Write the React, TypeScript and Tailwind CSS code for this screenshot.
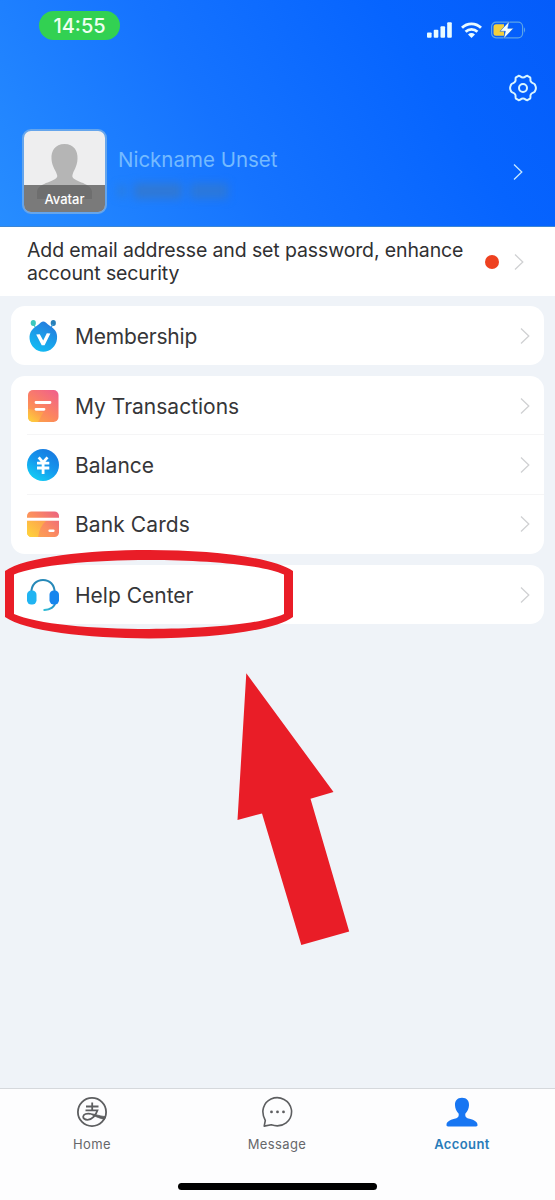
import type { ReactNode } from "react";

const Chevron = ({ className = "text-[#d0d1d3]" }: { className?: string }) => (
  <svg className={`w-[10px] h-[18px] shrink-0 ${className}`} viewBox="0 0 10 18" fill="none" stroke="currentColor" strokeWidth="1.3">
    <path d="M1 1.5 8.8 9 1 16.5" />
  </svg>
);

const MembershipIcon = () => (
  <svg className="w-8 h-[34px]" viewBox="0 0 32 34">
    <defs>
      <linearGradient id="member" x1="0.8" y1="0" x2="0.3" y2="1">
        <stop offset="0" stopColor="#2577dc" />
        <stop offset="1" stopColor="#12bdf4" />
      </linearGradient>
    </defs>
    <ellipse cx="6.3" cy="4" rx="2.6" ry="3" fill="#3cc8bd" />
    <path d="M6.5 5 9 9.5" stroke="#3cc8bd" strokeWidth="1.2" />
    <ellipse cx="26.3" cy="4" rx="2.6" ry="3" fill="#287fb8" />
    <path d="M26 5 23.5 9.5" stroke="#3b9cdc" strokeWidth="1.2" />
    <path d="M13.8 3.6Q16.3 1.2 18.8 3.6C21.5 6.8 25.5 7.8 28 11.3 30 14 30.3 16.8 30 20 29.2 27.4 23.3 32.7 16.3 32.7S3.4 27.4 2.6 20C2.3 16.8 2.8 14 4.8 11.3 7.3 7.8 11.1 6.8 13.8 3.6Z" fill="url(#member)" />
    <path d="m9.2 15.5 3.6-.2 3.4 6.2 3.6-7.2 3.6.2-5.8 11.7h-2.9Z" fill="#fff" />
  </svg>
);

const TransactionsIcon = () => (
  <svg className="w-8 h-8" viewBox="0 0 32 32">
    <defs>
      <linearGradient id="bill" x1="0.9" y1="0" x2="0.2" y2="1">
        <stop offset="0" stopColor="#f0608c" />
        <stop offset="0.6" stopColor="#fc855f" />
        <stop offset="1" stopColor="#fca746" />
      </linearGradient>
      <linearGradient id="billCorner" x1="0.7" y1="0.3" x2="0" y2="1">
        <stop offset="0" stopColor="#fda34a" />
        <stop offset="1" stopColor="#ffdf36" />
      </linearGradient>
      <clipPath id="billClip">
        <rect x="1" width="30.5" height="32" rx="5" />
      </clipPath>
    </defs>
    <g clipPath="url(#billClip)">
      <rect width="32" height="32" fill="url(#bill)" />
      <path d="M0 19C7 19 13 23 16.5 22L11 32H0Z" fill="url(#billCorner)" opacity="0.85" />
    </g>
    <path d="M9 12.5H23M9 19.3H17" stroke="#fff" strokeWidth="2.8" strokeLinecap="round" />
  </svg>
);

const BalanceIcon = () => (
  <svg className="w-8 h-8" viewBox="0 0 32 32">
    <defs>
      <linearGradient id="coin" x1="0.8" y1="0" x2="0.2" y2="1">
        <stop offset="0" stopColor="#1877df" />
        <stop offset="0.5" stopColor="#1598ee" />
        <stop offset="1" stopColor="#12d3f5" />
      </linearGradient>
    </defs>
    <circle cx="16" cy="16" r="16" fill="url(#coin)" />
    <path d="m11.7 8.4 4.3 5 4.5-5M10 14.2h12.3M10 19h12.3M16.1 13v12" stroke="#fff" strokeWidth="2.8" fill="none" />
  </svg>
);

const CardsIcon = () => (
  <svg className="w-8 h-8" viewBox="0 0 32 32">
    <defs>
      <linearGradient id="card" x1="1" y1="0" x2="0" y2="1">
        <stop offset="0" stopColor="#e95c86" />
        <stop offset="0.5" stopColor="#fb8c60" />
        <stop offset="1" stopColor="#fdb344" />
      </linearGradient>
      <linearGradient id="cardCorner" x1="1" y1="0" x2="0" y2="1">
        <stop offset="0" stopColor="#fda24e" />
        <stop offset="1" stopColor="#ffdc37" />
      </linearGradient>
      <clipPath id="cardClip">
        <rect y="3.5" width="32" height="25.5" rx="4.5" />
      </clipPath>
    </defs>
    <g clipPath="url(#cardClip)">
      <rect width="32" height="32" fill="url(#card)" />
      <path d="M0 13H19Q12 19 11 30H0Z" fill="url(#cardCorner)" opacity="0.9" />
      <path d="M0 11.3H32" stroke="#fff" strokeWidth="3" />
    </g>
    <path d="M22.7 22.7H26.3" stroke="#fff" strokeWidth="2.6" strokeLinecap="round" />
  </svg>
);

const HelpIcon = () => (
  <svg className="w-8 h-8" viewBox="0 0 32 32">
    <defs>
      <linearGradient id="boom" x1="0" y1="0" x2="1" y2="0">
        <stop offset="0" stopColor="#35c4d8" />
        <stop offset="1" stopColor="#268fc6" />
      </linearGradient>
    </defs>
    <path d="M4.3 14C4.3 5.5 9.5 1 16 1s11.7 4.5 11.7 13" fill="none" stroke="#2789b8" strokeWidth="2" />
    <path d="M28.3 23C28 28 23 31.2 16.5 31" fill="none" stroke="url(#boom)" strokeWidth="2" />
    <rect x="0" y="11.5" width="9.5" height="14" rx="4.2" fill="#20b4f2" />
    <rect x="22.5" y="11.5" width="9.5" height="14" rx="4.2" fill="#1685ee" />
  </svg>
);

const Row = ({ icon, label, spacing = "", divider }: { icon: ReactNode; label: string; spacing?: string; divider?: boolean }) => (
  <div className="relative flex items-center flex-1 pl-4 pr-[14px]">
    {icon}
    <p className={`ml-4 pt-[2px] flex-1 text-[21px] leading-7 text-[#363638] ${spacing}`}>{label}</p>
    <Chevron />
    {divider && <div className="absolute bottom-0 left-4 right-0 h-px bg-[#f5f5f6]" />}
  </div>
);

const StatusBar = () => (
  <div className="flex justify-between pt-[11px] pl-[39px] pr-[29px]">
    <div className="w-[81px] h-[29px] rounded-full bg-[#32d152] flex items-center justify-center text-[20px] text-[#effff2] font-medium">
      14:55
    </div>
    <div className="flex items-center gap-[9px] pt-[9px]">
      <svg className="w-[25px] h-4" viewBox="0 0 26 16" fill="#e9fbff">
        <rect x="0" y="10.5" width="4.8" height="5.5" rx="1" />
        <rect x="7" y="7.7" width="4.8" height="8.3" rx="1" />
        <rect x="14" y="4.2" width="4.8" height="11.8" rx="1" />
        <rect x="21" y="0" width="4.8" height="16" rx="1" />
      </svg>
      <svg className="w-[21px] h-4" viewBox="0 0 21 16" fill="none" stroke="#e9fbff" strokeWidth="2.8">
        <path d="M1 5.8C6.3.5 14.7.5 20 5.8M4.6 9.7c3.3-3.2 8.5-3.2 11.8 0" />
        <path d="M7 12.5Q10.5 9.7 14 12.5L10.5 16Z" fill="#e9fbff" stroke="none" />
      </svg>
      <svg className="w-[35px] h-[18px]" viewBox="0 0 35 18">
        <rect x="0.6" y="1.2" width="31" height="15.6" rx="4.5" fill="none" stroke="#5ba4e8" strokeWidth="1.2" />
        <path d="M33 6.3q2.3 2.7 0 5.4Z" fill="#5ba4e8" />
        <path d="M5 3.2h8v11.6H5Q2.5 14.8 2.5 12.3V5.7Q2.5 3.2 5 3.2Z" fill="#f3cf3d" />
        <path d="M18.5 0 9 10.3h5.4L12.5 18 22.5 7.3h-5.7Z" fill="#f2fcff" stroke="#1763cf" strokeWidth="0.6" />
      </svg>
    </div>
  </div>
);

const Header = () => (
  <div className="h-[227px] border-b border-[#3b86d5] bg-[linear-gradient(58deg,#278dff_0%,#1573ff_40%,#0664ff_75%,#045cfa_100%)]">
    <StatusBar />
    <div className="flex justify-end pr-[18px] pt-[34px]">
      <svg className="w-7 h-7" viewBox="0 0 28 28" fill="none" stroke="#d9f5ff" strokeWidth="2" strokeLinejoin="round">
        <path d="M9.6 1.8C11 1.4 11.5 3.4 14 3.4S17 1.4 18.4 1.8L21 3.3C22.1 4.3 20.8 5.6 21.8 7.6 23 9.7 25.3 9 25.9 10.6 26.3 11.8 26.9 12.2 26.9 14S26.3 16.2 25.9 17.4C25.3 19 23 18.3 21.8 20.4 20.8 22.4 22.1 23.7 21 24.7L18.4 26.2C17 26.6 16.5 24.6 14 24.6S11 26.6 9.6 26.2L7 24.7C5.9 23.7 7.2 22.4 6.2 20.4 5 18.3 2.7 19 2.1 17.4 1.7 16.2 1.1 15.8 1.1 14S1.7 11.8 2.1 10.6C2.7 9 5 9.7 6.2 7.6 7.2 5.6 5.9 4.3 7 3.3Z" />
        <circle cx="14" cy="14" r="4" />
      </svg>
    </div>
    <div className="flex items-center pl-[22px] pr-8 pt-[27px]">
      <div className="relative w-[85px] h-[85px] shrink-0 rounded-[9px] border-2 border-[#65a5ec] bg-[#eeeeef] overflow-hidden">
        <svg className="w-full h-full" viewBox="0 0 81 81" fill="#b5b5b5">
          <path d="M40.5 13C50 13 54 20 53.5 28 53.3 36 49 40 48.3 45 48.5 51 66 51 68 60V68H13V60C15 51 33 51 33.3 45 32.5 40 27.8 36 27.5 28 27 20 31 13 40.5 13Z" />
        </svg>
        <div className="absolute inset-x-0 bottom-0 h-[27px] bg-[#5c5c5c]/80 text-center text-[13px] leading-[28px] text-white font-medium">Avatar</div>
      </div>
      <div className="ml-[11px] flex-1 pt-px">
        <p className="text-[20.5px] leading-7 text-[#74baff]">Nickname Unset</p>
        {/* masked phone number */}
        <div className="mt-[9px] flex gap-2 items-center blur-[4px]">
          <div className="w-2 h-3 bg-[#347dcc]/60" />
          <div className="w-[48px] h-4 bg-[#3478cc]/80" />
          <div className="w-[38px] h-4 bg-[#3178cf]/75" />
        </div>
      </div>
      <Chevron className="text-[#c6e8ff]" />
    </div>
  </div>
);

const Notice = () => (
  <div className="h-[69px] bg-white flex items-center pl-[27px] pr-[31px]">
    <p className="flex-1 text-[19.5px] leading-[23px] tracking-[-0.12px] text-[#303032] whitespace-nowrap">
      Add email addresse and set password, enhance
      <br />
      account security
    </p>
    <div className="w-[14px] h-[14px] mr-[15px] rounded-full bg-[#ee4120]" />
    <Chevron />
  </div>
);

const TabBar = () => (
  <div className="h-28 mt-auto border-t border-[#d5d8dc] bg-[#fdfdfe]">
    <div className="grid grid-cols-[184px_186px_184px] pt-[7px] text-[13px] leading-4 text-[#66676a] tracking-[0.4px]">
      <div className="flex flex-col items-center gap-2">
        <svg className="w-8 h-8" viewBox="0 0 32 32" fill="none" stroke="#5d5e60" strokeWidth="1.8">
          <circle cx="16" cy="16" r="14.1" />
          <path d="M10 10.5H22.5M16.2 6.5V14.3M9.5 14.3H21.5C20 19 16 23.8 11.5 23.8 8.5 23.8 7 22.2 7.2 20.5 7.5 18.2 10.7 17.1 14.4 17.8" />
          <path d="M13.5 17.5C18 17.8 23 20 29.5 20.7L28.4 23.4C22.5 22 17.5 19.7 13.5 17.5Z" fill="#5d5e60" strokeWidth="0.8" />
        </svg>
        <p>Home</p>
      </div>
      <div className="flex flex-col items-center gap-2">
        <svg className="w-8 h-8" viewBox="0 0 32 32" fill="none" stroke="#5d5e60" strokeWidth="1.6">
          <path d="M4.3 24.5C-.7 15.5 2.5 6.5 10 3 19-.8 29 4.3 30.5 14 31.5 24.5 22 32.8 10.2 28.8L3.2 30.1Z" strokeLinejoin="round" />
          <g fill="#5d5e60" stroke="none">
            <circle cx="10.5" cy="15.9" r="1.4" />
            <circle cx="16.5" cy="15.9" r="1.4" />
            <circle cx="22.5" cy="15.9" r="1.4" />
          </g>
        </svg>
        <p>Message</p>
      </div>
      <div className="flex flex-col items-center gap-2">
        <svg className="w-8 h-8" viewBox="0 0 32 32" fill="#1876f2">
          <path d="M16 1.7C21 1.7 23.2 5 23 9.3 22.9 12.5 21.7 15.5 19.3 17.7 19 21.3 20.6 21.9 23.5 22.8 28.5 24.3 31.5 25.6 31.5 29 31.5 30 31 30.4 30 30.4H2C1 30.4.5 30 .5 29 .5 25.6 3.5 24.3 8.5 22.8 11.4 21.9 13 21.3 12.7 17.7 10.3 15.5 9.1 12.5 9 9.3 8.8 5 11 1.7 16 1.7Z" />
        </svg>
        <p className="font-semibold text-[#277bb9]">Account</p>
      </div>
    </div>
    <div className="w-[199px] h-[7px] mx-auto mt-[31px] rounded-full bg-black" />
  </div>
);

// red ring round Help Center and the arrow that points at it
const Annotations = () => (
  <svg className="absolute inset-0 w-[555px] h-[1200px] pointer-events-none" viewBox="0 0 555 1200" fill="#e91d27">
    <path
      fillRule="evenodd"
      d="M5 571C45 543 253 543 293 571V617C253 645.5 45 645.5 5 617ZM14 574.5V614C58 634 240 634 284 614V574.5C240 555 58 555 14 574.5Z"
    />
    <path d="M246.3 673.3 333.5 792 310.5 798.7 349.2 931.5 301.3 945 262 813.5 237.5 820Z" />
  </svg>
);

const App = () => {
  return (
    <div className="relative w-[555px] h-[1200px] overflow-hidden flex flex-col bg-[#eff3f8] font-['Inter','Liberation_Sans',sans-serif]">
      <Header />
      <Notice />
      <div className="flex flex-col gap-[11px] pt-[10px] pl-[11px] pr-[11px]">
        <div className="h-[59px] rounded-[14px] bg-white flex">
          <Row icon={<MembershipIcon />} label="Membership" spacing="tracking-[-0.2px]" />
        </div>
        <div className="h-[178px] rounded-[14px] bg-white flex flex-col">
          <Row icon={<TransactionsIcon />} label="My Transactions" divider />
          <Row icon={<BalanceIcon />} label="Balance" divider />
          <Row icon={<CardsIcon />} label="Bank Cards" spacing="tracking-[0.1px]" />
        </div>
        <div className="h-[59px] rounded-[14px] bg-white flex">
          <Row icon={<HelpIcon />} label="Help Center" />
        </div>
      </div>
      <TabBar />
      <Annotations />
    </div>
  );
};

export default App;
